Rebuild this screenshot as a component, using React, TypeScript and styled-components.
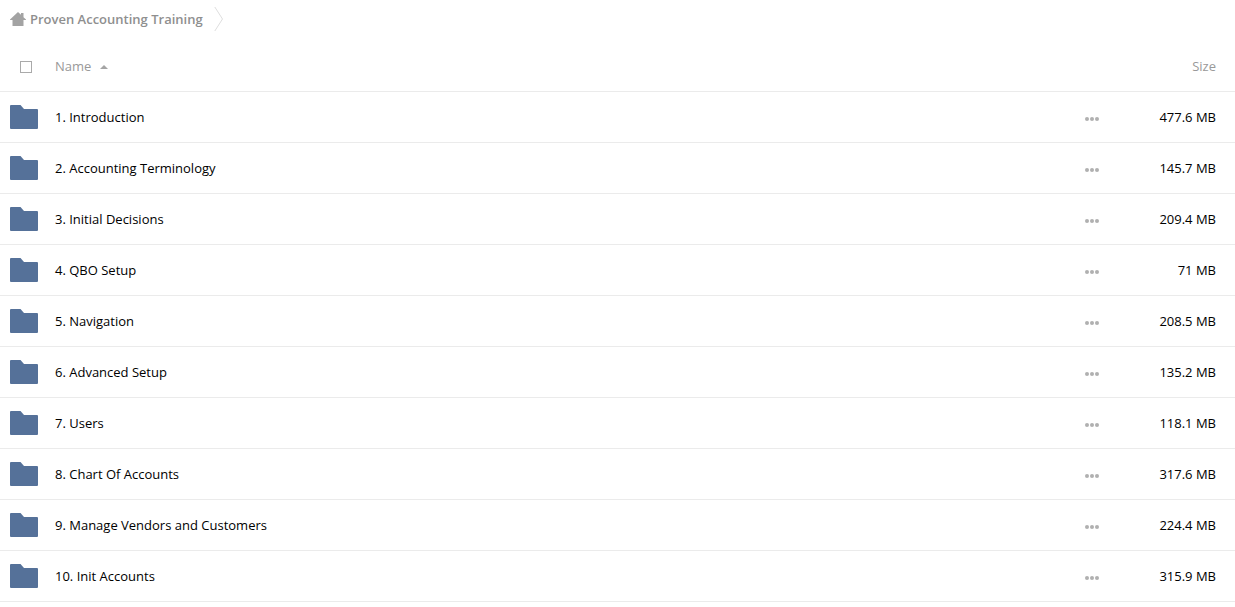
import React, { useState } from 'react';
import styled, { createGlobalStyle } from 'styled-components';

const GlobalStyle = createGlobalStyle`
  *, *::before, *::after { box-sizing: border-box; }
  body {
    margin: 0;
    background: #fff;
    color: #000;
    font: 400 13px/20px "Open Sans", "Noto Sans", sans-serif;
  }
`;

const Breadcrumbs = styled.nav`
  display: flex;
  align-items: center;
  gap: 11px;
  height: 41px;
  padding: 0 10px 3px;
`;

const Crumb = styled.a`
  display: flex;
  align-items: center;
  gap: 4px;
  color: #8f8f8f;
  font-weight: 600;
  text-decoration: none;
`;

const Table = styled.table`
  width: 100%;
  border-collapse: separate;
  border-spacing: 0;
  table-layout: fixed;
`;

const Row = styled.tr`
  height: 51px;
`;

const HeadCell = styled.th<{ $width?: number; $align?: string; $pad?: string }>`
  width: ${({ $width }) => ($width ? `${$width}px` : 'auto')};
  padding: ${({ $pad }) => $pad ?? '0'};
  border-bottom: 1px solid #ebebeb;
  color: #999;
  font-weight: 400;
  text-align: ${({ $align }) => $align ?? 'left'};
  vertical-align: middle;
`;

const Cell = styled.td<{ $align?: string; $pad?: string }>`
  padding: ${({ $pad }) => $pad ?? '0'};
  border-bottom: 1px solid #ebebeb;
  text-align: ${({ $align }) => $align ?? 'left'};
  vertical-align: middle;
`;

const Checkbox = styled.input`
  display: block;
  appearance: none;
  width: 12px;
  height: 12px;
  margin: 0;
  border: 1px solid #aaa;
  background: #fff;

  &:checked {
    background: #557199;
  }
`;

const SortButton = styled.button`
  display: flex;
  align-items: center;
  gap: 9px;
  padding: 0;
  border: 0;
  background: none;
  color: inherit;
  font: inherit;
  cursor: pointer;
`;

const FileLink = styled.a`
  color: inherit;
  text-decoration: none;
`;

const MoreButton = styled.button`
  display: block;
  padding: 4px 0 0;
  border: 0;
  background: none;
  cursor: pointer;
`;

const Icon = styled.svg`
  display: block;
  flex: none;
`;

const folders = [
  ['1. Introduction', '477.6 MB'],
  ['2. Accounting Terminology', '145.7 MB'],
  ['3. Initial Decisions', '209.4 MB'],
  ['4. QBO Setup', '71 MB'],
  ['5. Navigation', '208.5 MB'],
  ['6. Advanced Setup', '135.2 MB'],
  ['7. Users', '118.1 MB'],
  ['8. Chart Of Accounts', '317.6 MB'],
  ['9. Manage Vendors and Customers', '224.4 MB'],
  ['10. Init Accounts', '315.9 MB'],
];

const HomeIcon = () => (
  <Icon width="16" height="14" viewBox="0 0 16 14" fill="#a3a3a3" aria-hidden="true">
    <path d="M8 0l3 2.800V1h2.500v4.200L16 7.500V8h-2.500v6h-11V8H0v-.5z" />
  </Icon>
);

const Separator = () => (
  <Icon width="10" height="24" viewBox="0 0 10 24" fill="none" stroke="#dedede" aria-hidden="true">
    <path d="M.8 0L8.500 12L.8 24" />
  </Icon>
);

const SortArrow = () => (
  <Icon width="8" height="6" viewBox="0 0 8 6" fill="#a5a5a5" aria-hidden="true">
    <path d="M4 2l4 4H0z" />
  </Icon>
);

const FolderIcon = () => (
  <Icon width="28" height="24" viewBox="0 0 28 24" fill="#557199" aria-hidden="true">
    <path d="M1 0h9.500L14 4h13a1 1 0 0 1 1 1v18a1 1 0 0 1-1 1H1a1 1 0 0 1-1-1V1a1 1 0 0 1 1-1z" />
  </Icon>
);

const DotsIcon = () => (
  <Icon width="14" height="4" viewBox="0 0 14 4" fill="#b0b0b0" aria-hidden="true">
    <circle cx="2" cy="2" r="2" />
    <circle cx="7" cy="2" r="2" />
    <circle cx="12" cy="2" r="2" />
  </Icon>
);

export default function App() {
  const [ascending, setAscending] = useState(true);
  const rows = ascending ? folders : [...folders].reverse();

  return (
    <>
      <GlobalStyle />
      <Breadcrumbs aria-label="Breadcrumb">
        <Crumb href="#">
          <HomeIcon />
          Proven Accounting Training
        </Crumb>
        <Separator />
      </Breadcrumbs>
      <Table>
        <thead>
          <Row>
            <HeadCell $width={55} $pad="2px 0 0 20px">
              <Checkbox type="checkbox" aria-label="Select all" />
            </HeadCell>
            <HeadCell aria-sort={ascending ? 'ascending' : 'descending'}>
              <SortButton type="button" onClick={() => setAscending(!ascending)}>
                Name
                <SortArrow />
              </SortButton>
            </HeadCell>
            <HeadCell $width={50} aria-label="Actions" />
            <HeadCell $width={100} $align="right" $pad="0 19px 0 0">
              Size
            </HeadCell>
          </Row>
        </thead>
        <tbody>
          {rows.map(([name, size]) => (
            <Row key={name}>
              <Cell $pad="0 0 0 10px">
                <FolderIcon />
              </Cell>
              <Cell>
                <FileLink href="#">{name}</FileLink>
              </Cell>
              <Cell>
                <MoreButton type="button" aria-label={`Actions for ${name}`}>
                  <DotsIcon />
                </MoreButton>
              </Cell>
              <Cell $align="right" $pad="0 19px 0 0">
                {size}
              </Cell>
            </Row>
          ))}
        </tbody>
      </Table>
    </>
  );
}
